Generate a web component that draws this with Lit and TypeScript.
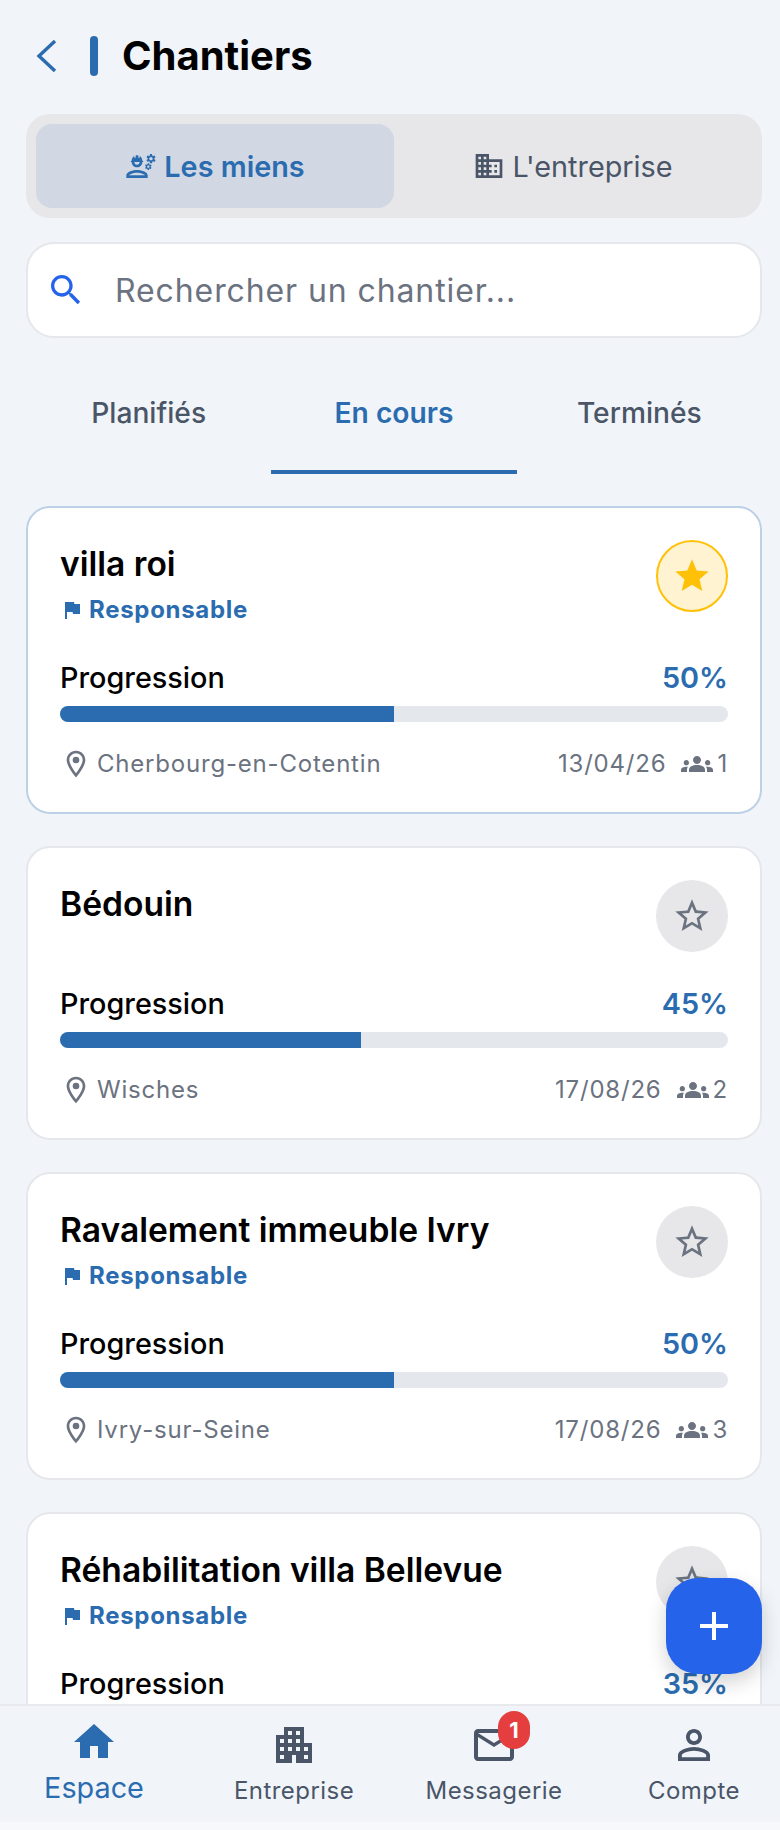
import { LitElement, html, css, svg } from "lit";
import { customElement } from "lit/decorators.js";

const PATHS = {
  engineering:
    "M9 15c-2.67 0-8 1.34-8 4v2h16v-2c0-2.66-5.33-4-8-4zm-6 4c.22-.72 3.31-2 6-2 2.7 0 5.8 1.29 6 2H3zM4.74 9H5c0 2.21 1.79 4 4 4s4-1.79 4-4h.26c.27 0 .49-.22.49-.49v-.02c0-.27-.22-.49-.49-.49H13c0-1.48-.81-2.75-2-3.45v.95c0 .28-.22.5-.5.5s-.5-.22-.5-.5V4.14C9.68 4.06 9.35 4 9 4s-.68.06-1 .14V5.5c0 .28-.22.5-.5.5S7 5.78 7 5.5v-.95C5.81 5.25 5 6.52 5 8h-.26c-.27 0-.49.22-.49.49v.03c0 .26.22.48.49.48zM11 9c0 1.1-.9 2-2 2s-2-.9-2-2h4zM21.98 6.23l.93-.83-.75-1.3-1.19.39c-.14-.11-.3-.2-.47-.27L20.25 3h-1.5l-.25 1.22c-.17.07-.33.16-.48.27l-1.18-.39-.75 1.3.93.83c-.02.17-.02.35 0 .52l-.93.85.75 1.3 1.2-.38c.13.1.28.18.43.25l.28 1.23h1.5l.27-1.22c.16-.07.3-.15.44-.25l1.19.38.75-1.3-.93-.85c.03-.19.02-.36.01-.53zM19.5 7.75c-.69 0-1.25-.56-1.25-1.25s.56-1.25 1.25-1.25 1.25.56 1.25 1.25-.56 1.25-1.25 1.25zM19.4 10.79l-.85.28c-.1-.08-.21-.14-.33-.19l-.19-.88h-1.07l-.18.87c-.12.05-.24.12-.34.19l-.84-.28-.54.93.66.59c-.01.13-.01.25 0 .37l-.66.61.54.93.86-.27c.1.07.2.13.31.18l.2.88h1.07l.19-.87c.11-.05.22-.11.32-.18l.85.27.54-.93-.66-.61c.01-.13.01-.25 0-.37l.66-.59-.54-.93zM17.5 13.39c-.49 0-.89-.4-.89-.89s.4-.89.89-.89.89.4.89.89-.4.89-.89.89z",
  domain:
    "M12 7V3H2v18h20V7H12zM6 19H4v-2h2v2zm0-4H4v-2h2v2zm0-4H4V9h2v2zm0-4H4V5h2v2zm4 12H8v-2h2v2zm0-4H8v-2h2v2zm0-4H8V9h2v2zm0-4H8V5h2v2zm10 12h-8v-2h2v-2h-2v-2h2v-2h-2V9h8v10zm-2-8h-2v2h2v-2zm0 4h-2v2h2v-2z",
  search:
    "M15.5 14h-.79l-.28-.27C15.41 12.59 16 11.11 16 9.5 16 5.91 13.09 3 9.5 3S3 5.91 3 9.5 5.91 16 9.5 16c1.61 0 3.09-.59 4.23-1.57l.27.28v.79l5 4.99L20.49 19l-4.99-5zm-6 0C7.01 14 5 11.99 5 9.5S7.01 5 9.5 5 14 7.01 14 9.5 11.99 14 9.5 14z",
  flag: "M14.4 6L14 4H5v17h2v-7h5.6l.4 2h7V6z",
  place:
    "M12 2C8.13 2 5 5.13 5 9c0 5.25 7 13 7 13s7-7.75 7-13c0-3.87-3.13-7-7-7zM7 9c0-2.76 2.24-5 5-5s5 2.24 5 5c0 2.88-2.88 7.19-5 9.88C9.92 16.21 7 11.85 7 9zM12 6.5a2.5 2.5 0 1 0 0 5 2.5 2.5 0 0 0 0-5z",
  groups:
    "M12 12.75c1.63 0 3.07.39 4.24.9 1.08.48 1.76 1.56 1.76 2.73V18H6v-1.61c0-1.18.68-2.26 1.76-2.73 1.17-.52 2.61-.91 4.24-.91zM4 13c1.1 0 2-.9 2-2s-.9-2-2-2-2 .9-2 2 .9 2 2 2zm1.13 1.1c-.37-.06-.74-.1-1.13-.1-.99 0-1.93.21-2.78.58C.48 14.9 0 15.62 0 16.43V18h4.5v-1.61c0-.83.23-1.61.63-2.29zM20 13c1.1 0 2-.9 2-2s-.9-2-2-2-2 .9-2 2 .9 2 2 2zm4 3.43c0-.81-.48-1.53-1.22-1.85-.85-.37-1.79-.58-2.78-.58-.39 0-.76.04-1.13.1.4.68.63 1.46.63 2.29V18H24v-1.57zM12 6c1.66 0 3 1.34 3 3s-1.34 3-3 3-3-1.34-3-3 1.34-3 3-3z",
  star: "M12 17.27L18.18 21l-1.64-7.03L22 9.24l-7.19-.61L12 2 9.19 8.63 2 9.24l5.46 4.73L5.82 21z",
  starOutline:
    "M22 9.24l-7.19-.62L12 2 9.19 8.63 2 9.24l5.46 4.73L5.82 21 12 17.27 18.18 21l-1.63-7.03L22 9.24zM12 15.4l-3.76 2.27 1-4.28-3.32-2.88 4.38-.38L12 6.1l1.71 4.04 4.38.38-3.32 2.88 1 4.28L12 15.4z",
  home: "M10 20v-6h4v6h5v-8h3L12 3 2 12h3v8z",
  apartment:
    "M17 11V3H7v4H3v14h8v-4h2v4h8V11h-4zM7 19H5v-2h2v2zm0-4H5v-2h2v2zm0-4H5V9h2v2zm4 4H9v-2h2v2zm0-4H9V9h2v2zm0-4H9V5h2v2zm4 8h-2v-2h2v2zm0-4h-2V9h2v2zm0-4h-2V5h2v2zm4 12h-2v-2h2v2zm0-4h-2v-2h2v2z",
  mail: "M22 6c0-1.1-.9-2-2-2H4c-1.1 0-2 .9-2 2v12c0 1.1.9 2 2 2h16c1.1 0 2-.9 2-2V6zm-2 0l-8 5-8-5h16zm0 12H4V8l8 5 8-5v10z",
  person:
    "M12 5.9c1.16 0 2.1.94 2.1 2.1s-.94 2.1-2.1 2.1S9.9 9.16 9.9 8s.94-2.1 2.1-2.1m0 9c2.97 0 6.1 1.46 6.1 2.1v1.1H5.9V17c0-.64 3.13-2.1 6.1-2.1M12 4C9.79 4 8 5.79 8 8s1.79 4 4 4 4-1.79 4-4-1.79-4-4-4zm0 9c-2.67 0-8 1.34-8 4v3h16v-3c0-2.66-5.33-4-8-4z",
  plus: "M19 13h-6v6h-2v-6H5v-2h6V5h2v6h6v2z",
};

type IconName = keyof typeof PATHS;

const icon = (name: IconName, cls = "") =>
  html`<svg class="icon ${cls}" viewBox="0 0 24 24" fill="currentColor">
    ${svg`<path d=${PATHS[name]} fill-rule="evenodd"></path>`}
  </svg>`;

interface Site {
  name: string;
  mine: boolean;
  percent: number;
  city: string;
  date: string;
  people: number;
  favourite: boolean;
}

const SITES: Site[] = [
  { name: "villa roi", mine: true, percent: 50, city: "Cherbourg-en-Cotentin", date: "13/04/26", people: 1, favourite: true },
  { name: "Bédouin", mine: false, percent: 45, city: "Wisches", date: "17/08/26", people: 2, favourite: false },
  { name: "Ravalement immeuble Ivry", mine: true, percent: 50, city: "Ivry-sur-Seine", date: "17/08/26", people: 3, favourite: false },
  { name: "Réhabilitation villa Bellevue", mine: true, percent: 35, city: "Lyon", date: "17/08/26", people: 2, favourite: false },
];

const NAV: { label: string; icon: IconName; active?: boolean; badge?: number }[] = [
  { label: "Espace", icon: "home", active: true },
  { label: "Entreprise", icon: "apartment" },
  { label: "Messagerie", icon: "mail", badge: 1 },
  { label: "Compte", icon: "person" },
];

@customElement("app-root")
export class AppRoot extends LitElement {
  static styles = css`
    :host {
      display: block;
      position: relative;
      height: 1830px;
      overflow: hidden;
      background: #f1f5fa;
      font-family: Inter, "Liberation Sans", sans-serif;
      color: #000;
    }

    .icon {
      display: block;
      flex: none;
    }

    .page {
      padding: 36px 18px 0 26px;
    }

    .header {
      display: flex;
      align-items: center;
      height: 40px;
    }

    .back {
      width: 22px;
      height: 34px;
      margin-left: 10px;
      fill: none;
      stroke: #2b6cb0;
      stroke-width: 3.4;
    }

    .accent {
      width: 8px;
      height: 40px;
      margin-left: 32px;
      border-radius: 4px;
      background: #2b6cb0;
    }

    h1 {
      margin: 0 0 0 24px;
      font-size: 40px;
      line-height: 40px;
      font-weight: 700;
    }

    .segment {
      display: flex;
      margin-top: 38px;
      padding: 10px;
      border-radius: 24px;
      background: #e7e7e9;
    }

    .segment div {
      flex: 1;
      height: 84px;
      display: flex;
      align-items: center;
      justify-content: center;
      gap: 7px;
      border-radius: 16px;
      font-size: 28.8px;
      color: #4a5568;
    }

    .segment .icon {
      width: 32px;
      height: 32px;
    }

    .segment .on {
      background: #d1d8e3;
      color: #2b6cb0;
      font-weight: 600;
    }

    .search {
      display: flex;
      align-items: center;
      height: 92px;
      margin-top: 24px;
      border: 2px solid #e5e7eb;
      border-radius: 28px;
      background: #fff;
      color: #6b7280;
      font-size: 32px;
      letter-spacing: 0.9px;
    }

    .search .icon {
      width: 40px;
      height: 40px;
      margin: 0 29px 0 18px;
      color: #2563eb;
    }

    .tabs {
      display: grid;
      grid-template-columns: repeat(3, 1fr);
      margin-top: 58px;
    }

    .tabs div {
      padding-bottom: 39px;
      border-bottom: 4px solid transparent;
      text-align: center;
      font-size: 28.2px;
      line-height: 35px;
      font-weight: 500;
      color: #4a5568;
    }

    .tabs .on {
      color: #2b6cb0;
      font-weight: 600;
      border-bottom-color: #2b6cb0;
    }

    .card {
      margin-top: 32px;
      padding: 32px;
      border: 2px solid #e5e7eb;
      border-radius: 24px;
      background: #fff;
    }

    .card.fav {
      border-color: #bcd0e6;
    }

    .head {
      display: flex;
      justify-content: space-between;
      align-items: flex-start;
      min-height: 73px;
    }

    h2 {
      margin: 0;
      font-size: 33.6px;
      line-height: 48px;
      font-weight: 600;
    }

    .role {
      display: flex;
      align-items: center;
      gap: 5px;
      margin: 6px 0 1px;
      font-size: 24px;
      line-height: 32px;
      font-weight: 700;
      color: #2b6cb0;
      letter-spacing: 0.7px;
    }

    .role .icon {
      width: 24px;
      height: 24px;
    }

    .star {
      display: flex;
      align-items: center;
      justify-content: center;
      width: 72px;
      height: 72px;
      box-sizing: border-box;
      border-radius: 50%;
      background: #e7e7e9;
      color: #6b7280;
    }

    .star .icon {
      width: 40px;
      height: 40px;
    }

    .star.on {
      background: #fff3d1;
      border: 2px solid #ffc107;
      color: #ffc107;
    }

    .row {
      display: flex;
      justify-content: space-between;
      margin-top: 34px;
      font-size: 28.8px;
      line-height: 34px;
      font-weight: 500;
    }

    .row b {
      color: #2b6cb0;
      font-weight: 600;
    }

    .track {
      height: 16px;
      margin-top: 11px;
      border-radius: 8px;
      overflow: hidden;
      background: #e4e7ec;
    }

    .fill {
      height: 100%;
      background: #2b6cb0;
    }

    .foot {
      display: flex;
      align-items: center;
      margin-top: 26px;
      font-size: 24px;
      line-height: 32px;
      color: #6b7280;
      letter-spacing: 0.8px;
    }

    .foot .place {
      width: 32px;
      height: 32px;
      margin-right: 5px;
    }

    .foot .city {
      flex: 1;
    }

    .foot .groups {
      width: 32px;
      height: 32px;
      margin: 0 4px 0 15px;
    }

    .fab {
      position: absolute;
      left: 666px;
      top: 1578px;
      display: flex;
      align-items: center;
      justify-content: center;
      width: 96px;
      height: 96px;
      border-radius: 32px;
      background: #2563eb;
      color: #fff;
      box-shadow: 0 8px 20px rgba(0, 0, 0, 0.18);
    }

    .fab .icon {
      width: 48px;
      height: 48px;
    }

    .nav {
      position: absolute;
      left: 0;
      right: 0;
      top: 1704px;
      height: 118px;
      box-sizing: border-box;
      padding-left: 34px;
      display: flex;
      gap: 80px;
      background: #f1f5fa;
      border-top: 2px solid #e8eaed;
    }

    .bottom-gap {
      position: absolute;
      left: 0;
      right: 0;
      top: 1822px;
      height: 8px;
      background: #f6f8fb;
    }

    .nav-item {
      position: relative;
      width: 120px;
      display: flex;
      flex-direction: column;
      align-items: center;
      padding-top: 15px;
      color: #4a5568;
      font-size: 24px;
      line-height: 32px;
      letter-spacing: 0.45px;
      white-space: nowrap;
    }

    .nav-item .icon {
      width: 48px;
      height: 48px;
      margin-bottom: 6px;
    }

    .nav-item.on {
      color: #2b6cb0;
      font-size: 28.8px;
      margin-top: -3px;
      letter-spacing: 0;
    }

    .badge {
      position: absolute;
      left: 64px;
      top: 5px;
      width: 32px;
      height: 38px;
      border-radius: 19px;
      background: #e53e3e;
      color: #fff;
      font-size: 22px;
      font-weight: 700;
      line-height: 38px;
      text-align: center;
      letter-spacing: 0;
    }
  `;

  private renderCard(s: Site) {
    return html`<section class="card ${s.favourite ? "fav" : ""}">
      <div class="head">
        <div>
          <h2>${s.name}</h2>
          ${s.mine
            ? html`<div class="role">${icon("flag")}Responsable</div>`
            : ""}
        </div>
        <div class="star ${s.favourite ? "on" : ""}">
          ${icon(s.favourite ? "star" : "starOutline")}
        </div>
      </div>
      <div class="row"><span>Progression</span><b>${s.percent}%</b></div>
      <div class="track">
        <div class="fill" style="width: ${s.percent}%"></div>
      </div>
      <div class="foot">
        ${icon("place", "place")}
        <span class="city">${s.city}</span>
        <span>${s.date}</span>
        ${icon("groups", "groups")}
        <span>${s.people}</span>
      </div>
    </section>`;
  }

  render() {
    return html`
      <div class="page">
        <header class="header">
          <svg class="back" viewBox="0 0 22 34">
            <path d="M19 2 3 17l16 15"></path>
          </svg>
          <div class="accent"></div>
          <h1>Chantiers</h1>
        </header>

        <div class="segment">
          <div class="on">${icon("engineering")}Les miens</div>
          <div>${icon("domain")}L'entreprise</div>
        </div>

        <div class="search">${icon("search")}Rechercher un chantier...</div>

        <div class="tabs">
          <div>Planifiés</div>
          <div class="on">En cours</div>
          <div>Terminés</div>
        </div>

        ${SITES.map((s) => this.renderCard(s))}
      </div>

      <div class="fab">${icon("plus")}</div>

      <nav class="nav">
        ${NAV.map(
          (n) => html`<div class="nav-item ${n.active ? "on" : ""}">
            ${icon(n.icon)}
            <span>${n.label}</span>
            ${n.badge ? html`<span class="badge">${n.badge}</span>` : ""}
          </div>`,
        )}
      </nav>
      <div class="bottom-gap"></div>
    `;
  }
}
